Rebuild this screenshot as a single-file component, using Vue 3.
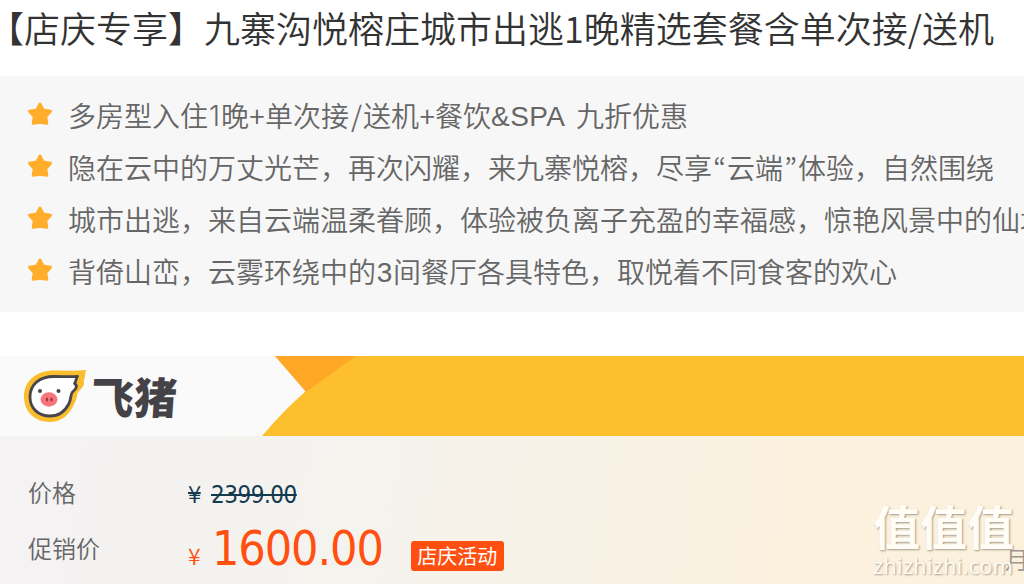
<script setup>
const features = [
  [['多房型入住'], ['1', 'one'], ['晚'], ['+', 'plus'], ['单次接'], ['/', 'slash'], ['送机'], ['+', 'plus'], ['餐饮'], ['&SPA', 'spa'], ['九折优惠']],
  [['隐在云中的万丈光芒，再次闪耀，来九寨悦榕，尽享'], ['“', 'quote'], ['云端'], ['”', 'quote'], ['体验，自然围绕']],
  [['城市出逃，来自云端温柔眷顾，体验被负离子充盈的幸福感，惊艳风景中的仙境']],
  [['背倚山峦，云雾环绕中的'], ['3', 'three'], ['间餐厅各具特色，取悦着不同食客的欢心']]
]
</script>

<template>
  <main class="page">
    <h1 class="title">【店庆专享】九寨沟悦榕庄城市出逃1晚精选套餐含单次接/送机</h1>
    <ul class="features">
      <li v-for="(row, i) in features" :key="i">
        <svg class="star" viewBox="0 0 26 26" width="26" height="26">
          <path d="M13 3 16.200 9.100 23.500 10.200 18.700 15.800 19.800 22.200 13 21.200 6.200 22.200 7.300 15.800 2.500 10.200 9.800 9.100Z" fill="#ffae2c" stroke="#ffae2c" stroke-width="3" stroke-linejoin="round" />
        </svg>
        <p><span v-for="(part, j) in row" :key="j" :class="part[1]">{{ part[0] }}</span></p>
      </li>
    </ul>
    <section class="banner">
      <svg class="ribbon" width="1024" height="80" viewBox="0 0 1024 80">
        <path d="M275 0H1024V80H262Q284 54 306 35Z" fill="#fdbf2d" />
        <path d="M275 0H356L306 36Z" fill="#ffa726" />
      </svg>
      <div class="brand">
        <svg width="66" height="56" viewBox="0 0 66 56">
          <path d="M64.500 2C62 6 64 9 61.500 13C63.500 16 60 20 58 22C54 25 56 29 53 34C48 47 39 54 28 54C12 54 2 43 2 29C2 12 15 2.500 32 2.500C43 2.500 54 3 64.500 2Z" fill="#f9bd2d" />
          <path d="M55.500 8.500C53.500 11 54.500 13 52.500 15.500C56 17.500 54 21 51 23.500C48 26 49.500 31 47 35.500C43 43.500 36 48 28 48C16 48 8 40 8 29C8 16 18 8.500 32 8.500C41 8.500 48 9 55.500 8.500Z" fill="#fff" stroke="#48464a" stroke-width="2.800" stroke-linejoin="round" />
          <ellipse cx="27" cy="31.500" rx="8.500" ry="7.200" fill="#f5777c" />
          <circle cx="18" cy="23" r="2" fill="#48464a" /><circle cx="36.500" cy="23" r="2" fill="#48464a" />
          <ellipse cx="25" cy="31.500" rx="1.200" ry="2" fill="#a3333c" /><ellipse cx="29.500" cy="31.500" rx="1.200" ry="2" fill="#a3333c" />
        </svg>
        <span class="wordmark">飞猪</span>
      </div>
    </section>
    <section class="prices">
      <dl>
        <div class="row"><dt>价格</dt><dd class="original"><span class="yen">¥</span><span>2399.00</span></dd></div>
        <div class="row promo"><dt>促销价</dt><dd class="sale"><span class="yen">¥</span><span class="amount">1600.00</span><span class="tag">店庆活动</span></dd></div>
      </dl>
      <span class="month">月</span>
      <div class="watermark"><b>值值值</b><span>zhizhizhi.com</span></div>
    </section>
  </main>
</template>

<style>
body { margin: 0; overflow: hidden; background: #fff; }
</style>

<style scoped>
.page { width: 1024px; height: 584px; overflow: hidden; font-family: "Noto Sans CJK SC", sans-serif; font-weight: 350; }
.title { margin: 0 0 0 -12px; height: 76px; line-height: 55px; font-size: 36px; font-weight: 350; color: #333; white-space: nowrap; }
.features { margin: 0; padding: 13px 0 15px 27px; height: 208px; background: #f7f7f7; list-style: none; overflow: hidden; }
.features li { display: flex; height: 52px; gap: 15px; }
.star { flex: none; margin-top: 12px; }
.features p { display: flex; margin: 0; font-size: 28px; line-height: 52px; color: #666; white-space: nowrap; }
.one, .plus, .slash, .quote, .spa, .three { display: block; flex: none; text-align: center; }
.one { width: 13px; font-family: Inter, sans-serif; padding-top: 1px; }
.plus { width: 16px; }
.slash { width: 14px; text-indent: 1px; }
.spa { width: 85px; text-align: left; font-family: "Liberation Sans", sans-serif; padding-top: 2px; letter-spacing: .4px; }
.three { width: 17px; font-family: "Liberation Sans", sans-serif; padding-top: 2px; }
.quote { width: 15px; font-family: "Noto Sans CJK KR", sans-serif; }
.banner { position: relative; margin-top: 44px; height: 80px; background: #fafafa; }
.ribbon { position: absolute; inset: 0; }
.brand { position: relative; display: flex; padding: 12px 0 0 22px; }
.wordmark { margin-left: 3px; font-size: 43px; line-height: 54px; font-weight: 900; color: #444246; transform: skewX(-4deg); }
.prices { position: relative; height: 148px; background: linear-gradient(100deg, #f4f2f3 0%, #f5f3ee 35%, #fbf1de 80%, #fcf1dc 100%); }
dl { margin: 0; padding: 30px 0 0 28px; }
.row { display: flex; height: 56px; align-items: center; font-size: 24px; color: #666; }
dt { width: 160px; position: relative; top: -3px; }
dd { margin: 0; display: flex; align-items: baseline; font-family: "DejaVu Sans Condensed", "DejaVu Sans", sans-serif; font-stretch: condensed; }
.original { color: #143a50; text-decoration: line-through; letter-spacing: -.5px; }
.yen { width: 23px; font-family: "Noto Sans CJK SC", sans-serif; line-height: 28px; }
.original .yen { font-size: 24px; }
.sale { color: #ff5012; position: relative; top: -2px; }
.sale .yen { font-size: 23px; width: 24px; }
.amount { font-size: 48px; line-height: 56px; letter-spacing: -1.1px; }
.tag { margin-left: 28px; width: 93px; height: 30px; border-radius: 3px; background: #ff5012; color: #fff; font: 400 20px/29px "Noto Sans CJK SC", sans-serif; text-align: center; position: relative; top: -1px; }
.month { position: absolute; left: 1005px; top: 105px; font-size: 24px; color: #666; opacity: .65; }
.watermark { position: absolute; left: 873px; top: 60px; color: #fffdf6; text-shadow: 1px 1px 2px #a39b8c; white-space: nowrap; }
.watermark b { display: block; font-size: 47px; line-height: 58px; font-weight: 700; }
.watermark span { display: block; font: 500 21.500px/24px "Open Sans", sans-serif; letter-spacing: .4px; }
</style>
